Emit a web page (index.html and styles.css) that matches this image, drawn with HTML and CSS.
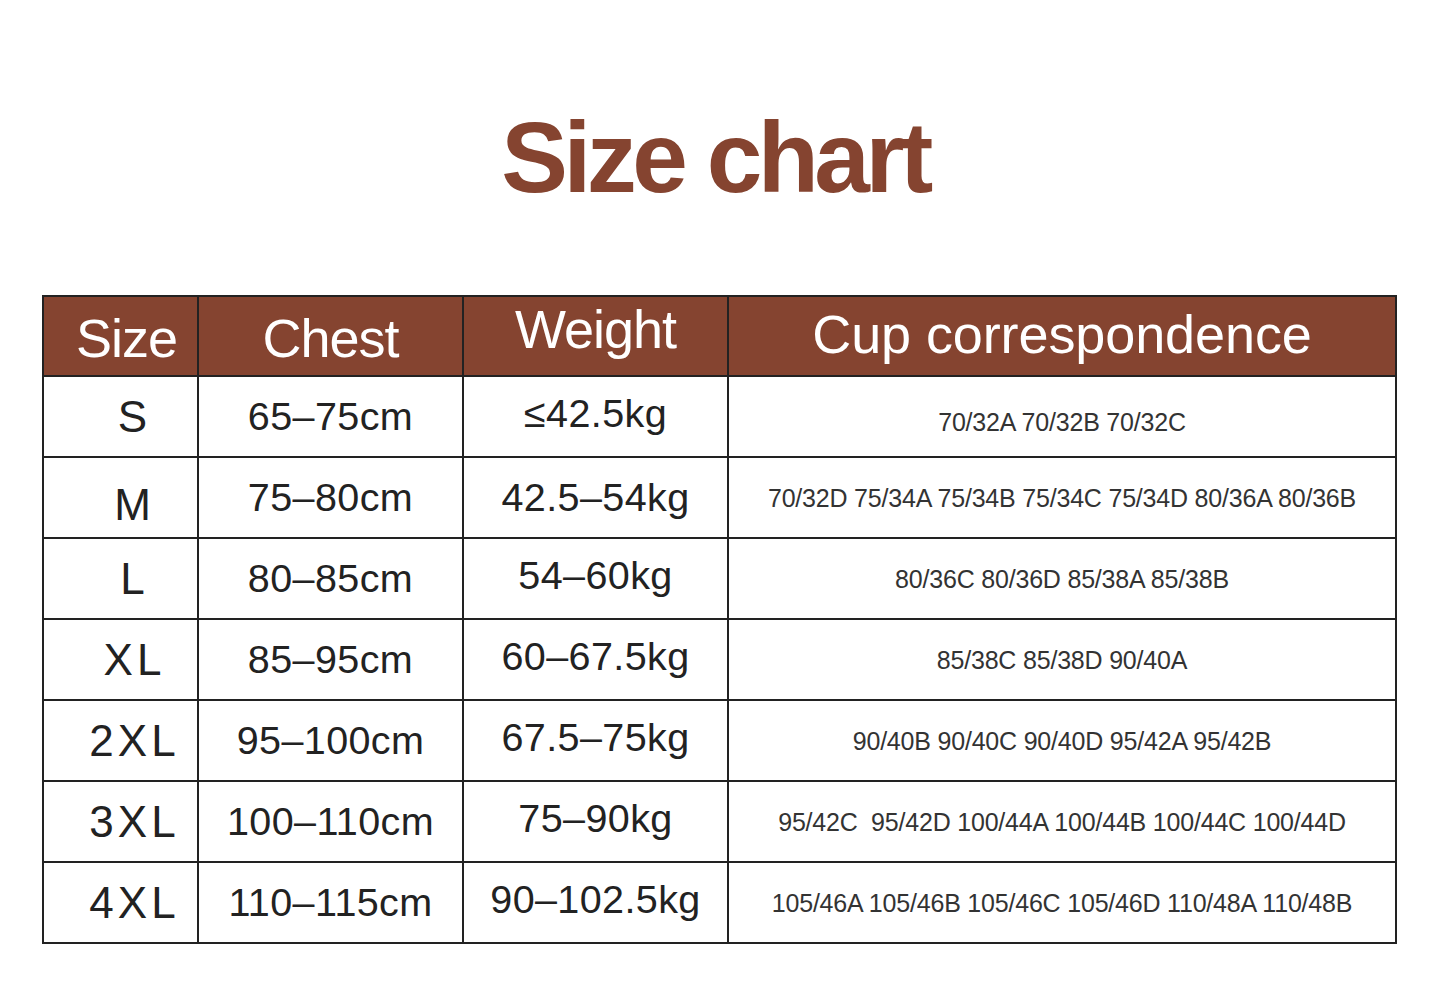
FILE: index.html
```html
<!DOCTYPE html>
<html lang="en">
<head>
<meta charset="utf-8">
<title>Size chart</title>
<link rel="stylesheet" href="styles.css">
</head>
<body>
<main class="page">
  <h1 class="title">Size chart</h1>
  <table class="chart">
    <colgroup>
      <col class="c-size"><col class="c-chest"><col class="c-weight"><col class="c-cup">
    </colgroup>
    <thead>
      <tr>
        <th class="h-size">Size</th>
        <th class="h-chest">Chest</th>
        <th class="h-weight">Weight</th>
        <th class="h-cup">Cup correspondence</th>
      </tr>
    </thead>
    <tbody>
      <tr><td class="size">S</td><td class="val">65–75cm</td><td class="val up">≤42.5kg</td><td class="cup low">70/32A 70/32B 70/32C</td></tr>
      <tr><td class="size down">M</td><td class="val">75–80cm</td><td class="val">42.5–54kg</td><td class="cup">70/32D 75/34A 75/34B 75/34C 75/34D 80/36A 80/36B</td></tr>
      <tr><td class="size">L</td><td class="val">80–85cm</td><td class="val up">54–60kg</td><td class="cup">80/36C 80/36D 85/38A 85/38B</td></tr>
      <tr><td class="size">XL</td><td class="val">85–95cm</td><td class="val up">60–67.5kg</td><td class="cup">85/38C 85/38D 90/40A</td></tr>
      <tr><td class="size">2XL</td><td class="val">95–100cm</td><td class="val up">67.5–75kg</td><td class="cup">90/40B 90/40C 90/40D 95/42A 95/42B</td></tr>
      <tr><td class="size">3XL</td><td class="val">100–110cm</td><td class="val up">75–90kg</td><td class="cup">95/42C&nbsp; 95/42D 100/44A 100/44B 100/44C 100/44D</td></tr>
      <tr><td class="size">4XL</td><td class="val">110–115cm</td><td class="val up">90–102.5kg</td><td class="cup">105/46A 105/46B 105/46C 105/46D 110/48A 110/48B</td></tr>
    </tbody>
  </table>
</main>
</body>
</html>
```
FILE: styles.css
```css
html, body {
  margin: 0;
  padding: 0;
  background: #ffffff;
}

.page {
  width: 1434px;
  padding-top: 107px;
  font-family: "Liberation Sans", Arial, sans-serif;
  color: #222222;
}

.title {
  margin: 0;
  height: 100px;
  font-size: 100px;
  line-height: 100px;
  font-weight: 700;
  letter-spacing: -4.5px;
  color: #854430;
  text-align: center;
  padding-right: 4px;
}

.chart {
  margin: 88px 0 0 42px;
  width: 1353px;
  border-collapse: collapse;
  table-layout: fixed;
  border: 2px solid #222222;
}

.c-size { width: 155px; }
.c-chest { width: 265px; }
.c-weight { width: 265px; }
.c-cup { width: 668px; }

.chart th,
.chart td {
  border: 2px solid #222222;
  padding: 0;
  text-align: center;
  vertical-align: middle;
}

.chart thead tr {
  height: 80px;
}

.chart th {
  background: #854430;
  color: #ffffff;
  font-weight: 400;
  font-size: 54px;
  letter-spacing: -1px;
}

.chart .h-size { padding: 4px 0 0 12px; }
.chart .h-chest { padding-top: 4px; }
.chart .h-weight { padding-bottom: 14px; }
.chart .h-cup { padding-bottom: 4px; letter-spacing: -0.1px; }

.chart tbody tr {
  height: 81px;
}

.chart .size {
  font-size: 44px;
  letter-spacing: 4px;
  padding-left: 28px;
}

.chart .size.down { padding-top: 14px; }

.chart .val {
  font-size: 39.5px;
  letter-spacing: 0.4px;
}

.chart .val.up { padding-bottom: 6px; }

.chart .cup {
  font-size: 25px;
  letter-spacing: -0.2px;
  color: #333333;
  padding-top: 1px;
}

.chart .cup.low { padding-top: 12px; }
```
